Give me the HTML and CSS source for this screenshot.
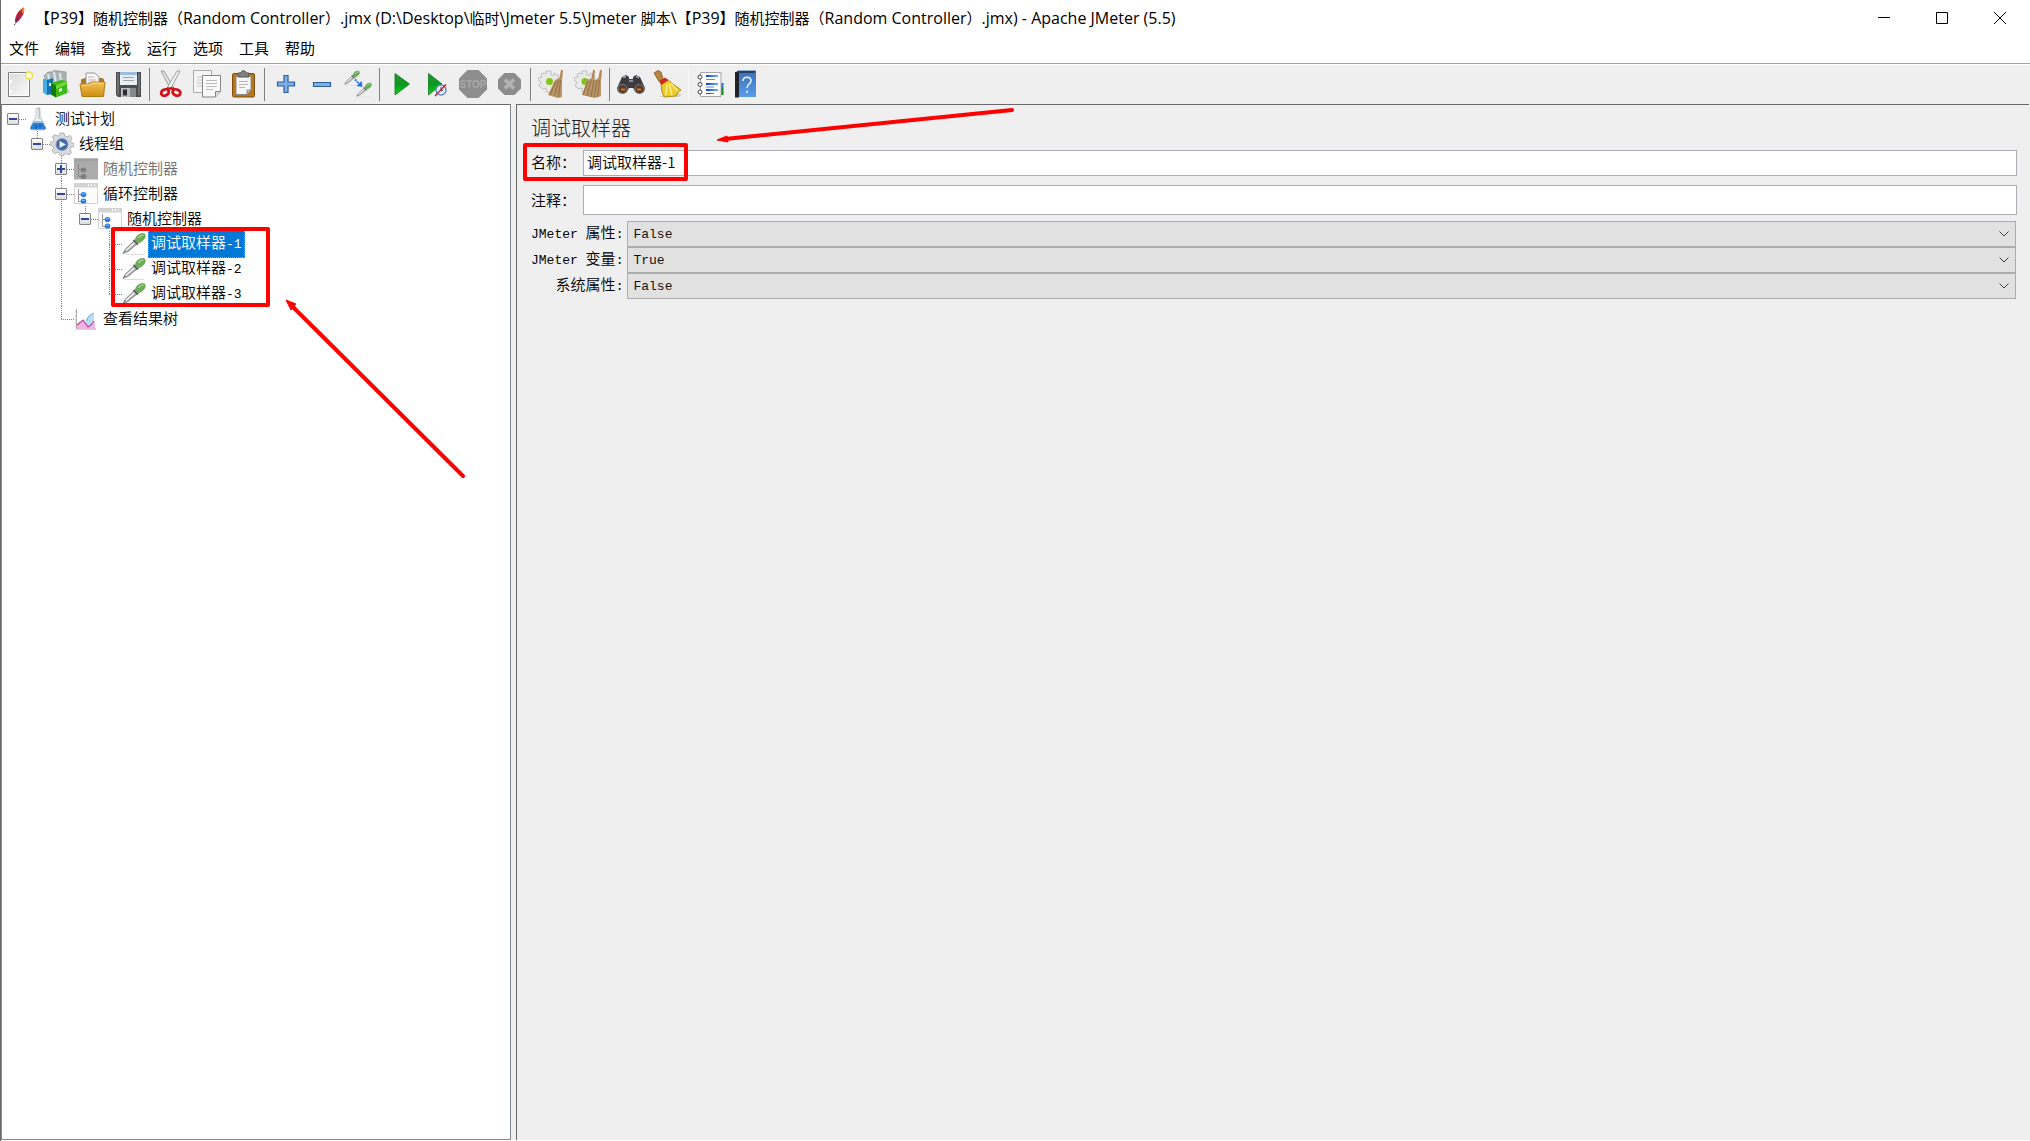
FILE: index.html
```html
<!DOCTYPE html>
<html lang="zh-CN">
<head>
<meta charset="utf-8">
<title>Apache JMeter (5.5)</title>
<link rel="stylesheet" href="styles.css">
</head>
<body>
<svg class="defs" aria-hidden="true">
  <defs>
    <linearGradient id="gGreen" x1="0" y1="0" x2="0" y2="1"><stop offset="0" stop-color="#2f8f3a"/><stop offset=".5" stop-color="#0a9a1c"/><stop offset="1" stop-color="#07d41a"/></linearGradient>
    <linearGradient id="gGold" x1="0" y1="0" x2="0" y2="1"><stop offset="0" stop-color="#f0c25a"/><stop offset="1" stop-color="#cf8d10"/></linearGradient>
    <linearGradient id="gPaper" x1="0" y1="0" x2="1" y2="1"><stop offset="0" stop-color="#d9d9d9"/><stop offset="1" stop-color="#fbfbfb"/></linearGradient>
    <linearGradient id="gBook" x1="0" y1="0" x2="0" y2="1"><stop offset="0" stop-color="#3c6fb8"/><stop offset="1" stop-color="#5a9cea"/></linearGradient>
    <linearGradient id="gBlue" x1="0" y1="0" x2="1" y2="0"><stop offset="0" stop-color="#0a3fd0"/><stop offset="1" stop-color="#6fb4f4"/></linearGradient>
    <symbol id="dropper" viewBox="0 0 24 24">
      <path d="M3 22.500h19" stroke="#dcdcdc"/>
      <path d="M1 21.500 3 17.500 12 9l3 3L6 19.500z" fill="#a4a7a9" stroke="#77797b" stroke-width=".8"/>
      <path d="M4 18.500 12.500 10.800" stroke="#f0f3f4" stroke-width="1.600"/>
      <path d="M11.500 8 16 12.500" stroke="#5c615e" stroke-width="1.800"/>
      <path d="M13 8.500C14 3.500 18 .8 22.500 1.800 25 5.500 20.500 9.500 16.500 11z" fill="#6cae57" stroke="#5b964b" stroke-width=".6"/>
      <path d="M16.500 6c1-2 3-3 5-2.800" stroke="#a3d594" stroke-width="1.400" fill="none"/>
    </symbol>
    <symbol id="controller" viewBox="0 0 24 24">
      <path d="M.5 1.500h23v20H.5z" fill="#fcfcfc" stroke="#d4d4d4"/>
      <path d="M0 1h24v4.500H0z" fill="#d2d2d2"/>
      <path d="M14 3h1M17 3h1M20 3h1" stroke="#fff" stroke-width="2"/>
      <path d="M4.500 7v12.500H8M4.500 12.500H8" stroke="#999" fill="none"/>
      <ellipse cx="9.500" cy="12.500" rx="2.800" ry="2.600" fill="#2a7ad8"/><ellipse cx="9.500" cy="19" rx="2.800" ry="2.600" fill="#2a7ad8"/>
      <path d="M8 11.800h3M8 18.300h3" stroke="#8fc0f2"/>
    </symbol>
    <symbol id="cog" viewBox="0 0 28 28">
      <path d="M8 1h5v4l3 .8V3l4 2 1 4-2 1v4l3 2-3 4-4-1-2 3H8v-4l-3 1-4-3 2-4-3-2V8l4-1-1-3 3-1 2 1z" fill="#e9eae8" stroke="#bfc1be"/>
    </symbol>
  </defs>
</svg>

<div class="window">
  <header class="titlebar">
    <svg class="feather" viewBox="0 0 14 22" aria-hidden="true"><path d="M3 15C2.500 9 7 2 12 .5c1 5-2 11-7.500 15z" fill="#c8203c"/><path d="M8 4C9.500 2 11 1 12 .5c.5 2 .2 4-.6 6z" fill="#f08a24"/><path d="M3 15c1-3 2-5 3.500-7l1 4L4.500 15.500z" fill="#a3245c"/><path d="M10 3 4 15 1 20.500" stroke="#5a2a6c" fill="none" stroke-dasharray="14 1 2"/></svg>
    <h1 class="title"><span class="han">【</span>P39<span class="han">】随机控制器（</span>Random Controller<span class="han">）</span>.jmx (D:\Desktop\<span class="han">临时</span>\Jmeter 5.5\Jmeter <span class="han">脚本</span>\<span class="han">【</span>P39<span class="han">】随机控制器（</span>Random Controller<span class="han">）</span>.jmx) - Apache JMeter (5.5)</h1>
    <div class="winbtns">
      <button class="winbtn" aria-label="最小化"><svg viewBox="0 0 12 12"><path d="M0 5.500h12"/></svg></button>
      <button class="winbtn" aria-label="最大化"><svg viewBox="0 0 12 12"><path d="M.5.5h11v11H.5z"/></svg></button>
      <button class="winbtn" aria-label="关闭"><svg viewBox="0 0 12 12"><path d="M0 0 12 12M12 0 0 12"/></svg></button>
    </div>
  </header>

  <nav class="menubar">
    <button class="menu">文件</button><button class="menu">编辑</button><button class="menu">查找</button><button class="menu">运行</button><button class="menu">选项</button><button class="menu">工具</button><button class="menu">帮助</button>
  </nav>

  <div class="toolbar" role="toolbar">
    <button class="tool" aria-label="新建"><svg viewBox="0 0 28 28"><path d="M2.500 2.500h21v24h-21z" fill="url(#gPaper)" stroke="#7f7f7f"/><path d="M3.500 3.500h19v22h-19z" fill="none" stroke="#fff"/><path d="M5 10v3M5 20v3" stroke="#fff" stroke-width="2"/><circle cx="23" cy="5.500" r="3.500" fill="#fffde0" stroke="#f1e04a" stroke-width="1.500"/></svg></button>
    <button class="tool" aria-label="模板"><svg viewBox="0 0 28 28"><path d="M22 25l6-3-3-4z" fill="#c4c4c4"/><path d="M2 6l4-4h4l2-1.500 5 .5 7 1v14L8 18z" fill="#aab4b6" stroke="#8b9699" stroke-width=".8"/><path d="M6 4l2 9M12 2l2 11M18 3l1 10" stroke="#e2e8e8" stroke-width="2"/><path d="M1 9l4 1 6-2v16l-6 1-4-3z" fill="#1574b4"/><path d="M1 9l4 1.500V25L1 22z" fill="#44aee2"/><path d="M7 13h3v3H7z" fill="#e8f3fa"/><path d="M9 13l10-3 6 1v12l-11 4.500-5-3z" fill="#3cb81a"/><path d="M9 13l5 2.500v12L9 24.500z" fill="#177a0a"/><path d="M14 15.500 25 11v3l-11 5z" fill="#72d83c"/><path d="M17 19l3-1v3l-3 1z" fill="#e4f6da"/></svg></button>
    <button class="tool" aria-label="打开"><svg viewBox="0 0 28 28"><path d="M3 9.500l4-1.500h17l2 1.500V20H3z" fill="#a8772a"/><path d="M8 3h9l4 4v10H8z" fill="#f7f7f7" stroke="#999"/><path d="M10 7h6M10 10h8M10 12.500h8" stroke="#b8b8b8"/><path d="M2 14h9l2-2h14l-1.500 14.500H4z" fill="url(#gGold)" stroke="#b37a12"/><path d="M3.500 15.200H12l2-2h11.500" stroke="#f9dc92" fill="none"/></svg></button>
    <button class="tool" aria-label="保存"><svg viewBox="0 0 28 28"><path d="M2 2h25v25H4l-2-2z" fill="#4a4c4f"/><path d="M3 3h2v22H3zM24 3h2v22h-2z" fill="#6b6e72"/><path d="M6 2h17v13H6z" fill="#e9eef3"/><path d="M6 2h17v3H6z" fill="#9bbcdc"/><path d="M9 7.500h11M9 10.500h11" stroke="#9aa3ab"/><path d="M7 18h15v9H7z" fill="#b9bbbd"/><path d="M9 19.500h4v6H9z" fill="#2b2d30"/><path d="M16 18h6v9h-6z" fill="#85888b"/></svg></button>
    <span class="sep"></span>
    <button class="tool" aria-label="剪切"><svg viewBox="0 0 28 28"><path d="M4 1l3 0 10 17-3 2z" fill="#dfe0e0" stroke="#8c8e8e" stroke-width=".8"/><path d="M23 1l-3 0-10 17 3 2z" fill="#f2f2f2" stroke="#8c8e8e" stroke-width=".8"/><ellipse cx="8" cy="22.500" rx="4" ry="3" fill="none" stroke="#d0121b" stroke-width="2.800" transform="rotate(-25 8 22.500)"/><ellipse cx="19.500" cy="22.500" rx="4" ry="3" fill="none" stroke="#d0121b" stroke-width="2.800" transform="rotate(25 19.500 22.500)"/><path d="M10 18.500l7 0" stroke="#d0121b" stroke-width="2.500"/></svg></button>
    <button class="tool" aria-label="复制"><svg viewBox="0 0 28 28"><path d="M.5.5h18v22H.5z" fill="#f5f5f5" stroke="#aaa"/><path d="M4 7h5M4 10h5M4 13h5M4 16h5" stroke="#c4c4c4"/><path d="M9.500 5.500h18v16l-5 5.500h-13z" fill="#fafafa" stroke="#858585"/><path d="M22.500 27v-5.500h5" fill="#ddd" stroke="#858585"/><path d="M13 10.500h11M13 13.500h11M13 16.500h11M13 19.500h7" stroke="#b9b9b9"/></svg></button>
    <button class="tool" aria-label="粘贴"><svg viewBox="0 0 28 28"><rect x="3.500" y="3.500" width="22" height="23.500" rx="1.500" fill="#b8761c" stroke="#7e4e0e"/><path d="M7 6h15v14l-4 4.500H7z" fill="#f7f7f7" stroke="#888"/><path d="M18 24.500V20h4z" fill="#ccc" stroke="#888"/><path d="M10 11.500h9M10 14.500h9M10 17.500h6" stroke="#b5b5b5"/><path d="M9 3h3c0-3 5-3 5 0h3v4H9z" fill="#80837f" stroke="#555"/></svg></button>
    <span class="sep"></span>
    <button class="tool" aria-label="展开"><svg viewBox="0 0 28 28"><path d="M12 5.500h4V12h6.500v4H16v6.500h-4V16H5.500v-4H12z" fill="#7eb0e4" stroke="#2d5f9e" stroke-width="1.200"/></svg></button>
    <button class="tool" aria-label="收起"><svg viewBox="0 0 28 28"><path d="M5.500 12.500h17v4h-17z" fill="#7eb0e4" stroke="#2d5f9e" stroke-width="1.200"/></svg></button>
    <button class="tool" aria-label="切换"><svg viewBox="0 0 28 28"><use href="#dropper" x="0" y="0" width="16" height="16"/><use href="#dropper" x="12" y="12" width="16" height="16"/><path d="M11 9.500l5 5" stroke="#2a6fe0" stroke-width="1.800" stroke-dasharray="2 1"/><path d="M18.500 17l-6-1 5-5z" fill="#2a6fe0"/></svg></button>
    <span class="sep"></span>
    <button class="tool" aria-label="启动"><svg viewBox="0 0 28 28"><path d="M8 3.500 22.500 14 8 25z" fill="url(#gGreen)" stroke="#0b7a18" stroke-width=".8"/></svg></button>
    <button class="tool" aria-label="无间隔启动"><svg viewBox="0 0 28 28"><path d="M5.500 3.500 19 14 5.500 25z" fill="url(#gGreen)" stroke="#0b7a18" stroke-width=".8"/><circle cx="18" cy="20" r="5" fill="#e8f1fa" stroke="#5a8fca" stroke-width="1.500"/><path d="M18 17v3.500h2" stroke="#456" fill="none"/><path d="M12 26 23 14.500" stroke="#d8222a" stroke-width="1.600"/></svg></button>
    <button class="tool" aria-label="停止"><svg viewBox="0 0 28 28"><path d="M8.500 0h11L28 8.500v11L19.500 28h-11L0 19.500v-11z" fill="#8e8e8e"/><text x="14" y="18" class="stoptext">STOP</text></svg></button>
    <button class="tool" aria-label="关闭"><svg viewBox="0 0 28 28"><path d="M9.500 3h10L26 9.500v9L19.500 25h-10L3 18.500v-9z" fill="#8c8c8c"/><path d="M10 9.500l9 9M19 9.500l-9 9" stroke="#b3b3b3" stroke-width="3.500"/></svg></button>
    <span class="sep"></span>
    <button class="tool" aria-label="清除"><svg viewBox="0 0 28 28"><use href="#cog" width="28" height="28"/><circle cx="11.500" cy="11.500" r="3.500" fill="#83c41c"/><path d="M23 0l2 0-1 11-3-1z" fill="#b48a58"/><path d="M17 10l4-2 3 1 0 18-4 1-10-3z" fill="#b99468"/><path d="M18 11l-6 14M20.500 10l-4 16M22.500 10l-2 17" stroke="#86643c" stroke-width=".8"/></svg></button>
    <button class="tool" aria-label="清除全部"><svg viewBox="0 0 28 28"><use href="#cog" width="28" height="28"/><circle cx="11" cy="11.500" r="3.500" fill="#83c41c"/><path d="M19 0l2 0-1 11-3-1zM26 0l2 0-1 11-3-1z" fill="#b48a58"/><path d="M13 10l5-2 3 2 4-2 2 1 0 17-6 2-13-3z" fill="#b99468"/><path d="M14 11l-5 14M17 10l-4 16M20 10l-3 17M23 10l-3 17M25.500 10l-2 17" stroke="#86643c" stroke-width=".8"/></svg></button>
    <span class="sep"></span>
    <button class="tool" aria-label="查找"><svg viewBox="0 0 28 28"><path d="M5 7l4-2 3 2v2h4V7l3-2 4 2 5 11-1 4-8 1-3-5h-4l-3 5-8-1-1-4z" fill="#3a3c40"/><path d="M6 7.500l3-1M19 6.500l3 1M12 11h4" stroke="#a6a8ac" stroke-width="1.500"/><circle cx="5.500" cy="19" r="4.500" fill="#5c3a22" stroke="#77797c" stroke-width="1.200"/><circle cx="22.500" cy="19" r="4.500" fill="#5c3a22" stroke="#77797c" stroke-width="1.200"/><path d="M4 19.500h4M20 19.500h4" stroke="#c47a3a" stroke-width="2"/></svg></button>
    <button class="tool" aria-label="重置查找"><svg viewBox="0 0 28 28"><path d="M5 27h21l3-2-4-2z" fill="#cfcfcf"/><path d="M1 3l4-2.500L8 2l2 7-4 2.500z" fill="#b98540" stroke="#85571e" stroke-width=".8"/><path d="M8 14l7-4 5 4 8 6-3 2-2 4-12 1-2-5z" fill="#eccb2a" stroke="#b18f10"/><path d="M14 14l-1 11M16 13l3 12M18 13l6 8" stroke="#fbf08c" stroke-width="1.400"/><path d="M6 11.500l6-4 3.500 2.500-7 5z" fill="#cf2a20"/></svg></button>
    <span class="sep sep-faint"></span>
    <button class="tool" aria-label="函数助手"><svg viewBox="0 0 28 28"><path d="M24 13h3.500v5H24z" fill="#2377e0"/><path d="M24 18h3.500v7H24z" fill="#1c8a22"/><path d="M4.500 2.500h20.500v24H4.500z" fill="#fdfdfd" stroke="#a6a6a6"/><g fill="url(#gBlue)"><path d="M10 5h12v2H10zM10 13h12v2H10zM10 19h12v2H10zM10 23h8v1h-8z"/></g><path d="M10 9.500h9M10 17h8" stroke="#5c8fdc"/><g fill="#fff" stroke="#444"><circle cx="4" cy="7" r="2"/><circle cx="4" cy="14.500" r="2"/><circle cx="4" cy="22" r="2"/></g></svg></button>
    <button class="tool" aria-label="帮助"><svg viewBox="0 0 28 28"><path d="M4 2l2-1.500h18V27H4z" fill="url(#gBook)"/><path d="M3 2h4v25.500H3z" fill="#1f2329"/><path d="M5 1h18v2H6z" fill="#2b3f5c"/><path d="M11 11c0-5 8-5 8 0 0 3-4 3-4 7M15 20.500v2.500" fill="none" stroke="#e6f0fb" stroke-width="1.600"/></svg></button>
  </div>

  <main class="split">
    <section class="treepane">
      <ul class="tree root">
        <li>
          <div class="row"><button class="toggle" aria-label="折叠"></button><svg class="nodeicon" viewBox="0 0 24 24"><path d="M10 1.500h4v8L19.500 20q1 3-2 3h-11q-3 0-2-3L10 9.500z" fill="#eef1f3" stroke="#bfc5c9"/><path d="M8 14h8l3.500 6.500q.5 2-2 2h-11q-2.500 0-2-2z" fill="#2b7fd4"/><path d="M8 14h8l1 2H7z" fill="#8ec3f0"/><path d="M10 18v4M14 17v3" stroke="#0f4f9c"/><path d="M13 0v12" stroke="#aab0b3"/></svg><span class="label">测试计划</span></div>
          <ul class="tree">
            <li>
              <div class="row"><button class="toggle" aria-label="折叠"></button><svg class="nodeicon" viewBox="0 0 24 24"><path d="M10 1h4l.7 3 2.300 1L20 3.500 22 6l-1.500 3 .5 1.500 3 1v3l-3 .8-1 2.200 1.500 3-2.500 2.500-3-1.500-2 .8L13.500 24h-3l-1-3-2-.8-3 1.500L2 19l1.500-3-.8-2L0 13.500v-3l3-1L3.800 7.500 2.300 4.500 4.800 2.500 7.700 4 9.500 3.500z" fill="#d8dadb" stroke="#a4a6a9" stroke-width=".8"/><circle cx="12" cy="12.500" r="6" fill="#3f68ac" stroke="#8b9bb5"/><path d="M9.500 9 16 12.500 9.500 16z" fill="#e7f0fb"/></svg><span class="label">线程组</span></div>
              <ul class="tree">
                <li><div class="row"><button class="toggle plus" aria-label="展开"></button><svg class="nodeicon" viewBox="0 0 24 24"><path d="M0 1.500h24v21H0z" fill="#ababab"/><path d="M0 1.500h24v3H0z" fill="#a0a0a0"/><path d="M4.500 7v12.500H8M4.500 12.500H8" stroke="#8a8a8a" fill="none"/><ellipse cx="9.500" cy="13" rx="2.800" ry="2.500" fill="#7e7e7e"/><ellipse cx="9.500" cy="19.500" rx="2.800" ry="2.500" fill="#7e7e7e"/></svg><span class="label off">随机控制器</span></div></li>
                <li>
                  <div class="row"><button class="toggle" aria-label="折叠"></button><svg class="nodeicon" viewBox="0 0 24 24"><use href="#controller"/></svg><span class="label">循环控制器</span></div>
                  <ul class="tree">
                    <li>
                      <div class="row"><button class="toggle" aria-label="折叠"></button><svg class="nodeicon" viewBox="0 0 24 24"><use href="#controller"/></svg><span class="label">随机控制器</span></div>
                      <ul class="tree">
                        <li><div class="row leaf"><svg class="nodeicon" viewBox="0 0 24 24"><use href="#dropper"/></svg><span class="label selected">调试取样器<span class="mono">-1</span></span></div></li>
                        <li><div class="row leaf"><svg class="nodeicon" viewBox="0 0 24 24"><use href="#dropper"/></svg><span class="label">调试取样器<span class="mono">-2</span></span></div></li>
                        <li><div class="row leaf"><svg class="nodeicon" viewBox="0 0 24 24"><use href="#dropper"/></svg><span class="label">调试取样器<span class="mono">-3</span></span></div></li>
                      </ul>
                    </li>
                  </ul>
                </li>
                <li><div class="row leaf"><svg class="nodeicon" viewBox="0 0 24 24"><path d="M2.500 2v20H22" fill="none" stroke="#a9a9a9"/><path d="M1 5h2M1 9h2M1 13h2M1 17h2" stroke="#bbb"/><path d="M3 22l0-5 6-4 4 3 4-5 4 5v6z" fill="#edb4e4"/><path d="M12 12l8-6v12l-4 1-4-3z" fill="#b8dcf6"/><path d="M3 18l6-5 5 7 3-2 3-4" fill="none" stroke="#c4478f" stroke-width="1.200"/><path d="M12 14l3-5 5-3" fill="none" stroke="#6ea9dc"/></svg><span class="label">查看结果树</span></div></li>
              </ul>
            </li>
          </ul>
        </li>
      </ul>
    </section>

    <section class="editor">
      <h2 class="heading">调试取样器</h2>
      <div class="field name"><label for="name">名称：</label><input id="name" type="text" value="调试取样器-1"></div>
      <div class="field comment"><label for="comment">注释：</label><input id="comment" type="text" value=""></div>
      <div class="options">
        <label for="p1"><span class="mono">JMeter </span>属性<span class="mono">:</span></label>
        <select id="p1"><option selected>False</option><option>True</option></select>
        <label for="p2"><span class="mono">JMeter </span>变量<span class="mono">:</span></label>
        <select id="p2"><option>False</option><option selected>True</option></select>
        <label for="p3">系统属性<span class="mono">:</span></label>
        <select id="p3"><option selected>False</option><option>True</option></select>
      </div>
    </section>
  </main>

  <div class="mark mark-samplers"></div>
  <div class="mark mark-name"></div>
  <svg class="arrow arrow-tree" viewBox="0 0 182 180" aria-hidden="true"><path d="M6 6 177 176" class="shaft"/><path d="M0 0 10 4 7 7 5 10z" class="head"/></svg>
  <svg class="arrow arrow-name" viewBox="0 0 300 40" aria-hidden="true"><path d="M8 33 295 4" class="shaft"/><path d="M0 34 10 30 11 36z" class="head"/></svg>
</div>
</body>
</html>
```
FILE: styles.css
```css
* { box-sizing: border-box; }

body {
  margin: 0;
  background: #fff;
  color: #000;
  font: 350 15px/20px "Noto Sans CJK SC", sans-serif;
}

button {
  margin: 0;
  padding: 0;
  border: 0;
  background: none;
  color: inherit;
  font: inherit;
}

.defs { position: absolute; width: 0; height: 0; }
svg { display: block; }
.mono { font-family: "Liberation Mono", monospace; font-size: 13px; white-space: pre; }

.window {
  position: relative;
  display: flex;
  flex-direction: column;
  min-height: 100vh;
  border-left: 1px solid #6b6b6b;
  padding-bottom: 1px;
}

/* Title bar and menus */
.titlebar { display: flex; align-items: center; height: 36px; padding: 0 1px 0 11px; }
.feather { width: 14px; height: 22px; margin-right: 9px; }
.title {
  flex: 1;
  margin: 0;
  overflow: hidden;
  font: 16px/20px "Open Sans", "Noto Sans CJK SC", sans-serif;
  text-spacing-trim: space-all;
  white-space: nowrap;
}
.han { font-size: 15px; }
.winbtns { display: flex; }
.winbtn { display: grid; place-items: center; width: 58px; height: 36px; }
.winbtn svg { width: 12px; height: 12px; fill: none; stroke: #000; }

.menubar { display: flex; height: 28px; border-bottom: 1px solid #a0a0a0; font-weight: 400; }
.menu { padding: 0 8px 4px; line-height: 23px; }

/* Toolbar */
.toolbar {
  display: flex;
  height: 40px;
  padding-left: 1px;
  border-top: 1px solid #fff;
  background: #efefef;
}
.tool { display: grid; place-items: center; width: 36px; padding-bottom: 1px; }
.tool svg { width: 28px; height: 28px; }
.stoptext { font: bold 10px "Liberation Sans", sans-serif; fill: #a9a9a9; text-anchor: middle; }
.sep { width: 7px; padding: 3px; }
.sep::before { content: ""; display: block; width: 1px; height: 33px; background: #808080; }
.sep-faint::before { background: #f8f8f8; }

/* Split pane */
.split { flex: 1; display: flex; gap: 5px; background: #efefef; padding-right: 1px; }
.treepane {
  flex: 0 0 510px;
  border: 1px solid #828790;
  border-top-color: #696969;
  background: #fff;
  padding: 1px 0 0 5px;
}
.editor {
  flex: 1;
  padding: 11px 12px 0 14px;
  border: solid #696969;
  border-width: 1px 0 0 1px;
}

/* Tree */
.tree { margin: 0; padding: 0 0 0 24px; list-style: none; }
.tree.root { padding-left: 0; }
.tree li { position: relative; }
.tree:not(.root) > li::before {
  content: "";
  position: absolute;
  top: 0;
  left: 6px;
  width: 1px;
  height: 100%;
  background: repeating-linear-gradient(#808080 0 1px, #fff 1px 2px);
}
.tree:not(.root) > li:last-child::before { height: 13px; }
.row {
  position: relative;
  display: flex;
  align-items: center;
  height: 25px;
  background: repeating-linear-gradient(90deg, #808080 0 1px, #fff 1px 2px) 6px 13px / 13px 1px no-repeat;
}
.toggle {
  width: 12px;
  height: 12px;
  margin-right: 7px;
  border: 1px solid #848484;
  border-radius: 1px;
  background: linear-gradient(#2b4a9b, #2b4a9b) center / 8px 2px no-repeat, linear-gradient(#fff, #dcdcdc);
}
.toggle.plus {
  background: linear-gradient(#2b4a9b, #2b4a9b) center / 8px 2px no-repeat,
    linear-gradient(#2b4a9b, #2b4a9b) center / 2px 8px no-repeat, linear-gradient(#fff, #dcdcdc);
}
.leaf { padding-left: 19px; }
.nodeicon { width: 24px; height: 24px; margin-right: 2px; }
.label { padding: 0 3px 2px; line-height: 23px; white-space: nowrap; }
.label.off { color: #707070; }
.label.selected { background: #0078d7; color: #fff; outline: 1px dotted #ff8728; outline-offset: -1px; }

/* Editor form */
.heading { margin: 0 0 10px; font-size: 20px; font-weight: 300; line-height: 24px; color: #222; }
.field { display: flex; align-items: center; }
.field label { width: 52px; }
.field input {
  flex: 1;
  min-width: 0;
  height: 100%;
  padding: 0 3px 3px;
  border: 1px solid #abadb3;
  background: #fff;
  font: inherit;
}
.name { height: 26px; margin-bottom: 9px; }
.name label { padding-bottom: 3px; }
.comment { height: 30px; margin-bottom: 6px; }
.options {
  display: grid;
  grid-template-columns: auto 1fr;
  grid-auto-rows: 26px;
  align-items: center;
  column-gap: 4px;
  padding-right: 1px;
}
.options label { padding-bottom: 2px; text-align: right; white-space: nowrap; }
.options select {
  appearance: none;
  height: 26px;
  padding: 0 20px 0 5px;
  border: 1px solid #adadad;
  border-radius: 0;
  background: #e1e1e1 url("data:image/svg+xml,%3Csvg xmlns='http://www.w3.org/2000/svg' width='10' height='6'%3E%3Cpath d='M.5.5 5 5 9.500.5' fill='none' stroke='%23404040'/%3E%3C/svg%3E") right 6px center no-repeat;
  color: #111;
  font: 13px "Liberation Mono", monospace;
}

/* Red annotations over the window */
.mark { position: absolute; border: 4px solid #f00; border-radius: 2px; }
.mark-samplers { left: 110px; top: 227px; width: 159px; height: 80px; }
.mark-name { left: 522px; top: 143px; width: 165px; height: 38px; }
.arrow { position: absolute; overflow: visible; }
.arrow-tree { left: 285px; top: 300px; width: 182px; height: 180px; }
.arrow-name { left: 716px; top: 106px; width: 300px; height: 40px; }
.shaft { fill: none; stroke: #f00; stroke-width: 4; stroke-linecap: round; }
.head { fill: #f00; stroke: #f00; }
```
